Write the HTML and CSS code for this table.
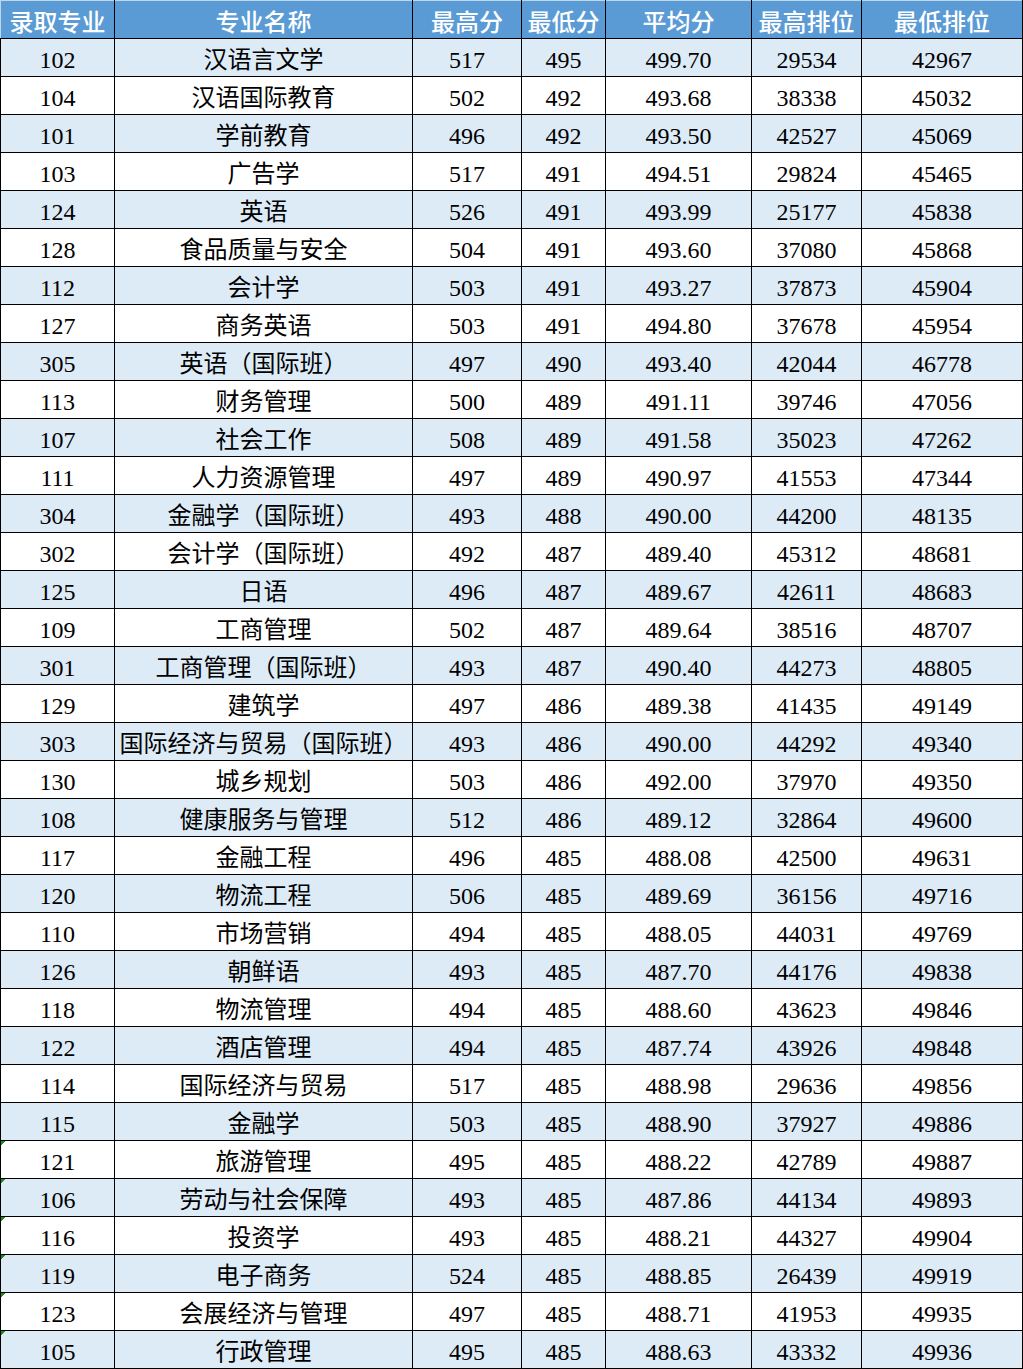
FILE: index.html
```html
<!DOCTYPE html>
<html lang="zh-CN">
<head>
<meta charset="utf-8">
<title>录取分数</title>
<link rel="stylesheet" href="styles.css">
</head>
<body>
<table class="score-table">
  <colgroup>
    <col class="c-code"><col class="c-name"><col class="c-max"><col class="c-min"><col class="c-avg"><col class="c-rmax"><col class="c-rmin">
  </colgroup>
  <thead>
    <tr>
      <th>录取专业</th><th>专业名称</th><th>最高分</th><th>最低分</th><th>平均分</th><th>最高排位</th><th>最低排位</th>
    </tr>
  </thead>
  <tbody>
    <tr><td>102</td><td>汉语言文学</td><td>517</td><td>495</td><td>499.70</td><td>29534</td><td>42967</td></tr>
    <tr><td>104</td><td>汉语国际教育</td><td>502</td><td>492</td><td>493.68</td><td>38338</td><td>45032</td></tr>
    <tr><td>101</td><td>学前教育</td><td>496</td><td>492</td><td>493.50</td><td>42527</td><td>45069</td></tr>
    <tr><td>103</td><td>广告学</td><td>517</td><td>491</td><td>494.51</td><td>29824</td><td>45465</td></tr>
    <tr><td>124</td><td>英语</td><td>526</td><td>491</td><td>493.99</td><td>25177</td><td>45838</td></tr>
    <tr><td>128</td><td>食品质量与安全</td><td>504</td><td>491</td><td>493.60</td><td>37080</td><td>45868</td></tr>
    <tr><td>112</td><td>会计学</td><td>503</td><td>491</td><td>493.27</td><td>37873</td><td>45904</td></tr>
    <tr><td>127</td><td>商务英语</td><td>503</td><td>491</td><td>494.80</td><td>37678</td><td>45954</td></tr>
    <tr><td>305</td><td>英语（国际班）</td><td>497</td><td>490</td><td>493.40</td><td>42044</td><td>46778</td></tr>
    <tr><td>113</td><td>财务管理</td><td>500</td><td>489</td><td>491.11</td><td>39746</td><td>47056</td></tr>
    <tr><td>107</td><td>社会工作</td><td>508</td><td>489</td><td>491.58</td><td>35023</td><td>47262</td></tr>
    <tr><td>111</td><td>人力资源管理</td><td>497</td><td>489</td><td>490.97</td><td>41553</td><td>47344</td></tr>
    <tr><td>304</td><td>金融学（国际班）</td><td>493</td><td>488</td><td>490.00</td><td>44200</td><td>48135</td></tr>
    <tr><td>302</td><td>会计学（国际班）</td><td>492</td><td>487</td><td>489.40</td><td>45312</td><td>48681</td></tr>
    <tr><td>125</td><td>日语</td><td>496</td><td>487</td><td>489.67</td><td>42611</td><td>48683</td></tr>
    <tr><td>109</td><td>工商管理</td><td>502</td><td>487</td><td>489.64</td><td>38516</td><td>48707</td></tr>
    <tr><td>301</td><td>工商管理（国际班）</td><td>493</td><td>487</td><td>490.40</td><td>44273</td><td>48805</td></tr>
    <tr><td>129</td><td>建筑学</td><td>497</td><td>486</td><td>489.38</td><td>41435</td><td>49149</td></tr>
    <tr><td>303</td><td>国际经济与贸易（国际班）</td><td>493</td><td>486</td><td>490.00</td><td>44292</td><td>49340</td></tr>
    <tr><td>130</td><td>城乡规划</td><td>503</td><td>486</td><td>492.00</td><td>37970</td><td>49350</td></tr>
    <tr><td>108</td><td>健康服务与管理</td><td>512</td><td>486</td><td>489.12</td><td>32864</td><td>49600</td></tr>
    <tr><td>117</td><td>金融工程</td><td>496</td><td>485</td><td>488.08</td><td>42500</td><td>49631</td></tr>
    <tr><td>120</td><td>物流工程</td><td>506</td><td>485</td><td>489.69</td><td>36156</td><td>49716</td></tr>
    <tr><td>110</td><td>市场营销</td><td>494</td><td>485</td><td>488.05</td><td>44031</td><td>49769</td></tr>
    <tr><td>126</td><td>朝鲜语</td><td>493</td><td>485</td><td>487.70</td><td>44176</td><td>49838</td></tr>
    <tr><td>118</td><td>物流管理</td><td>494</td><td>485</td><td>488.60</td><td>43623</td><td>49846</td></tr>
    <tr><td>122</td><td>酒店管理</td><td>494</td><td>485</td><td>487.74</td><td>43926</td><td>49848</td></tr>
    <tr><td>114</td><td>国际经济与贸易</td><td>517</td><td>485</td><td>488.98</td><td>29636</td><td>49856</td></tr>
    <tr><td>115</td><td>金融学</td><td>503</td><td>485</td><td>488.90</td><td>37927</td><td>49886</td></tr>
    <tr><td class="flag">121</td><td>旅游管理</td><td>495</td><td>485</td><td>488.22</td><td>42789</td><td>49887</td></tr>
    <tr><td class="flag">106</td><td>劳动与社会保障</td><td>493</td><td>485</td><td>487.86</td><td>44134</td><td>49893</td></tr>
    <tr><td class="flag">116</td><td>投资学</td><td>493</td><td>485</td><td>488.21</td><td>44327</td><td>49904</td></tr>
    <tr><td class="flag">119</td><td>电子商务</td><td>524</td><td>485</td><td>488.85</td><td>26439</td><td>49919</td></tr>
    <tr><td class="flag">123</td><td>会展经济与管理</td><td>497</td><td>485</td><td>488.71</td><td>41953</td><td>49935</td></tr>
    <tr><td class="flag">105</td><td>行政管理</td><td>495</td><td>485</td><td>488.63</td><td>43332</td><td>49936</td></tr>
  </tbody>
</table>
</body>
</html>
```

FILE: styles.css
```css
html, body {
  margin: 0;
  padding: 0;
  background: #ffffff;
}

.score-table {
  width: 1022px;
  border-collapse: collapse;
  table-layout: fixed;
  font-family: "Liberation Serif", "Noto Sans CJK SC", serif;
  font-size: 24px;
  color: #000000;
}

.c-code { width: 114px; }
.c-name { width: 298px; }
.c-max  { width: 109px; }
.c-min  { width: 84px; }
.c-avg  { width: 146px; }
.c-rmax { width: 110px; }
.c-rmin { width: 161px; }

.score-table tr {
  height: 38px;
}

.score-table th,
.score-table td {
  border: 1px solid #000000;
  padding: 4px 0 0 0;
  text-align: center;
  vertical-align: middle;
  line-height: 28px;
  white-space: nowrap;
  overflow: hidden;
}

.score-table th {
  background: #5b9bd5;
  color: #ffffff;
  font-family: "Noto Sans CJK SC", sans-serif;
  font-weight: 500;
  border-top: 1px solid #bdd7ee;
  padding-top: 3px;
}

.score-table th:first-child {
  border-left: 1px solid #bdd7ee;
}

.score-table tbody tr:nth-child(odd) td {
  background-color: #ddebf7;
}

.score-table td.flag {
  background-image: linear-gradient(135deg, #1e8a1e 0, #1e8a1e 3px, transparent 3px);
  background-size: 6px 6px;
  background-repeat: no-repeat;
  background-position: 0 0;
}
```
